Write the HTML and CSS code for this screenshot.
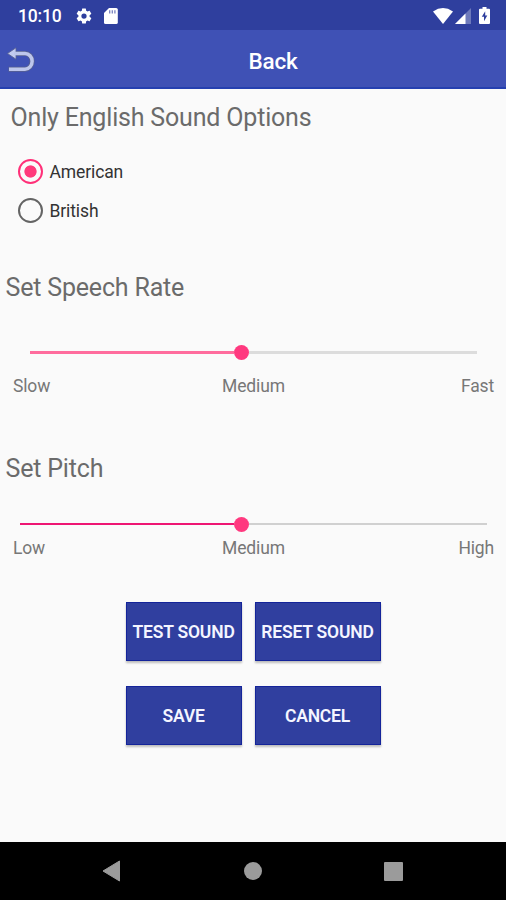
FILE: index.html
```html
<!DOCTYPE html>
<html lang="en">
<head>
<meta charset="utf-8">
<title>Sound options</title>
<link rel="stylesheet" href="styles.css">
</head>
<body>
<div class="status">
  <span class="clock">10:10</span>
  <svg class="gear" width="18" height="18" viewBox="0 0 24 24"><path fill="#fff" d="M19.43 12.98c.04-.32.07-.64.07-.98s-.03-.66-.07-.98l2.11-1.65c.19-.15.24-.42.12-.64l-2-3.46c-.12-.22-.39-.3-.61-.22l-2.49 1c-.52-.4-1.08-.73-1.69-.98l-.38-2.65A.49.49 0 0 0 14 2h-4c-.25 0-.46.18-.49.42l-.38 2.65c-.61.25-1.17.59-1.69.98l-2.49-1c-.23-.09-.49 0-.61.22l-2 3.46c-.13.22-.07.49.12.64l2.11 1.65c-.04.32-.07.65-.07.98s.03.66.07.98l-2.11 1.65c-.19.15-.24.42-.12.64l2 3.46c.12.22.39.3.61.22l2.49-1c.52.4 1.08.73 1.69.98l.38 2.65c.03.24.24.42.49.42h4c.25 0 .46-.18.49-.42l.38-2.65c.61-.25 1.17-.59 1.69-.98l2.49 1c.23.09.49 0 .61-.22l2-3.46c.12-.22.07-.49-.12-.64zM12 15.500a3.500 3.500 0 1 1 0-7 3.500 3.500 0 0 1 0 7z"/></svg>
  <svg class="card" width="14" height="16" viewBox="0 0 14 16"><path fill="#fff" d="M5 0h7.200q1.600 0 1.600 1.600v12.800q0 1.600-1.600 1.600H1.600Q0 16 0 14.400V5z"/><path stroke="#2f3f9e" stroke-opacity=".65" stroke-width="1.300" d="M5.700 2.200v3.300M8.300 2.200v3.300M10.900 2.200v3.300"/></svg>
  <span class="spacer"></span>
  <svg width="20" height="16" viewBox="0 0 20 16"><path fill="#fff" d="M0 3.400Q10-3.400 20 3.400L10 16z"/></svg>
  <svg class="signal" width="16" height="16" viewBox="0 0 16 16"><path fill="#fff" fill-opacity=".3" d="M16 0v16H0z"/><path fill="#fff" d="M10.500 5.500V16H0z"/></svg>
  <svg class="battery" width="11" height="17" viewBox="0 0 11 17"><path fill="#fff" d="M3.500 0h4v1.700H10q1 0 1 1V16q0 1-1 1H1q-1 0-1-1V2.700q0-1 1-1h2.500z"/><path fill="#2f3f9e" d="M6.200 4.200 2.800 9.800h2.200v4.400l3.300-5.700H6.200z"/></svg>
</div>
<header class="bar">
  <svg class="back" width="28" height="26" viewBox="0 0 28 26"><path fill="none" stroke="#59628f" stroke-width="5" d="M7 6.500h11a7.100 7.800 0 0 1 0 15.700H1.500"/><path fill="#c3cbf0" stroke="#59628f" stroke-width=".8" d="M.5 6.500 9 .8v11.400z"/><path fill="none" stroke="#bdc6ec" stroke-width="3.500" d="M7 6.500h11a7.100 7.800 0 0 1 0 15.700H2"/></svg>
  <h1 class="title">Back</h1>
</header>
<main class="content">
  <h2 class="heading first">Only English Sound Options</h2>
  <div class="option"><span class="radio on"></span><span>American</span></div>
  <div class="option"><span class="radio"></span><span>British</span></div>

  <h2 class="heading rate">Set Speech Rate</h2>
  <div class="slider wide"><span class="fill"></span><span class="thumb"></span><span class="rest"></span></div>
  <div class="labels rate-labels"><span>Slow</span><span>Medium</span><span class="end">Fast</span></div>

  <h2 class="heading pitch">Set Pitch</h2>
  <div class="slider full"><span class="fill"></span><span class="thumb"></span><span class="rest"></span></div>
  <div class="labels pitch-labels"><span>Low</span><span>Medium</span><span class="end">High</span></div>

  <div class="buttons">
    <button>TEST SOUND</button><button>RESET SOUND</button>
    <button>SAVE</button><button>CANCEL</button>
  </div>
</main>
<nav class="nav">
  <svg width="19" height="22" viewBox="0 0 19 22"><path fill="#9b9b9b" d="M17.500 1v20L1 11z" stroke="#9b9b9b" stroke-linejoin="round"/></svg>
  <span class="home"></span>
  <span class="recent"></span>
</nav>
</body>
</html>
```
FILE: styles.css
```css
* { box-sizing: border-box; }
body {
  margin: 0;
  width: 506px;
  height: 900px;
  display: flex;
  flex-direction: column;
  overflow: hidden;
  background: #fafafa;
  font-family: Roboto, "Liberation Sans", sans-serif;
  color: #6b6b6b;
}
svg { display: block; flex: none; }
h1, h2 { margin: 0; }

.status {
  flex: none;
  height: 30px;
  display: flex;
  align-items: center;
  padding: 1px 16px 0 18px;
  background: #2f3f9e;
  color: #fff;
}
.clock { font-size: 17.5px; font-weight: 500; letter-spacing: -.15px; line-height: 20px; width: 57px; padding-top: 1px; }
.card { margin-left: 11px; }
.spacer { flex: 1; }
.signal { margin-left: 2px; }
.battery { margin-left: 8px; }

.bar {
  flex: none;
  height: 59px;
  display: flex;
  align-items: center;
  padding: 2px 8px 0 7px;
  background: #3f51b5;
  border-bottom: 2px solid #2540b0;
}
.title {
  flex: 1;
  padding: 2px 0 0 13px;
  text-align: center;
  font-size: 22.5px;
  font-weight: 500;
  letter-spacing: -.2px;
  line-height: 28px;
  color: #fff;
}

.content { flex: 1; display: flex; flex-direction: column; }
.heading { flex: none; font-size: 25px; font-weight: 400; letter-spacing: -.18px; line-height: 30px; padding-left: 5.5px; white-space: nowrap; }
.first { margin-top: 14px; padding-left: 10.5px; }
.first + .option { margin-top: 19px; }
.option {
  height: 39px;
  display: flex;
  align-items: center;
  gap: 7px;
  padding-left: 17.5px;
  font-size: 17.5px;
  letter-spacing: -.12px;
  color: #333;
}
.radio { width: 25px; height: 25px; border: 2.5px solid #646464; border-radius: 50%; }
.on { border-color: #ff3078; background: radial-gradient(circle, #ff3a7c 5.700px, transparent 6.500px); }

.rate { margin-top: 43px; }
.slider { height: 16px; display: flex; align-items: center; }
.wide { margin: 41px 29px 0 30px; }
.full { margin: 32px 19px 0 20px; }
.fill { height: 3px; background: #ff6c9d; }
.wide .fill { width: 204px; }
.full .fill { width: 214px; background: #ee1673; }
.thumb { width: 15px; height: 15px; border-radius: 50%; background: #ff397f; }
.rest { flex: 1; height: 3px; background: #dcdcdc; }
.full .fill { height: 2.5px; }
.full .rest { height: 2px; background: #d0d0d0; }

.labels {
  display: grid;
  grid-template-columns: 1fr auto 1fr;
  padding: 0 12px 0 13px;
  font-size: 17.5px;
  letter-spacing: -.15px;
  line-height: 22px;
  color: #777;
}
.end { text-align: right; }
.rate-labels { margin-top: 15px; }
.pitch { margin-top: 57px; }
.pitch-labels { margin-top: 5px; }

.buttons {
  display: grid;
  grid-template-columns: 116px 126px;
  grid-auto-rows: 59px;
  gap: 25px 13px;
  justify-content: center;
  margin-top: 43px;
}
button {
  margin: 0;
  padding: 0;
  border: 1px solid #14249a;
  background: #303f9f;
  color: #f4f5ff;
  font: 600 17.5px/22px Roboto, sans-serif;
  letter-spacing: -.18px;
  white-space: nowrap;
  box-shadow: 0 2px 2px rgba(0, 0, 0, .25);
}

.nav {
  flex: none;
  height: 58px;
  display: flex;
  align-items: center;
  justify-content: space-between;
  padding: 0 103px 0 102px;
  background: #000;
}
.home { width: 18px; height: 18px; border-radius: 50%; background: #9b9b9b; }
.recent { width: 19px; height: 19px; border-radius: 1px; background: #9b9b9b; }
```
